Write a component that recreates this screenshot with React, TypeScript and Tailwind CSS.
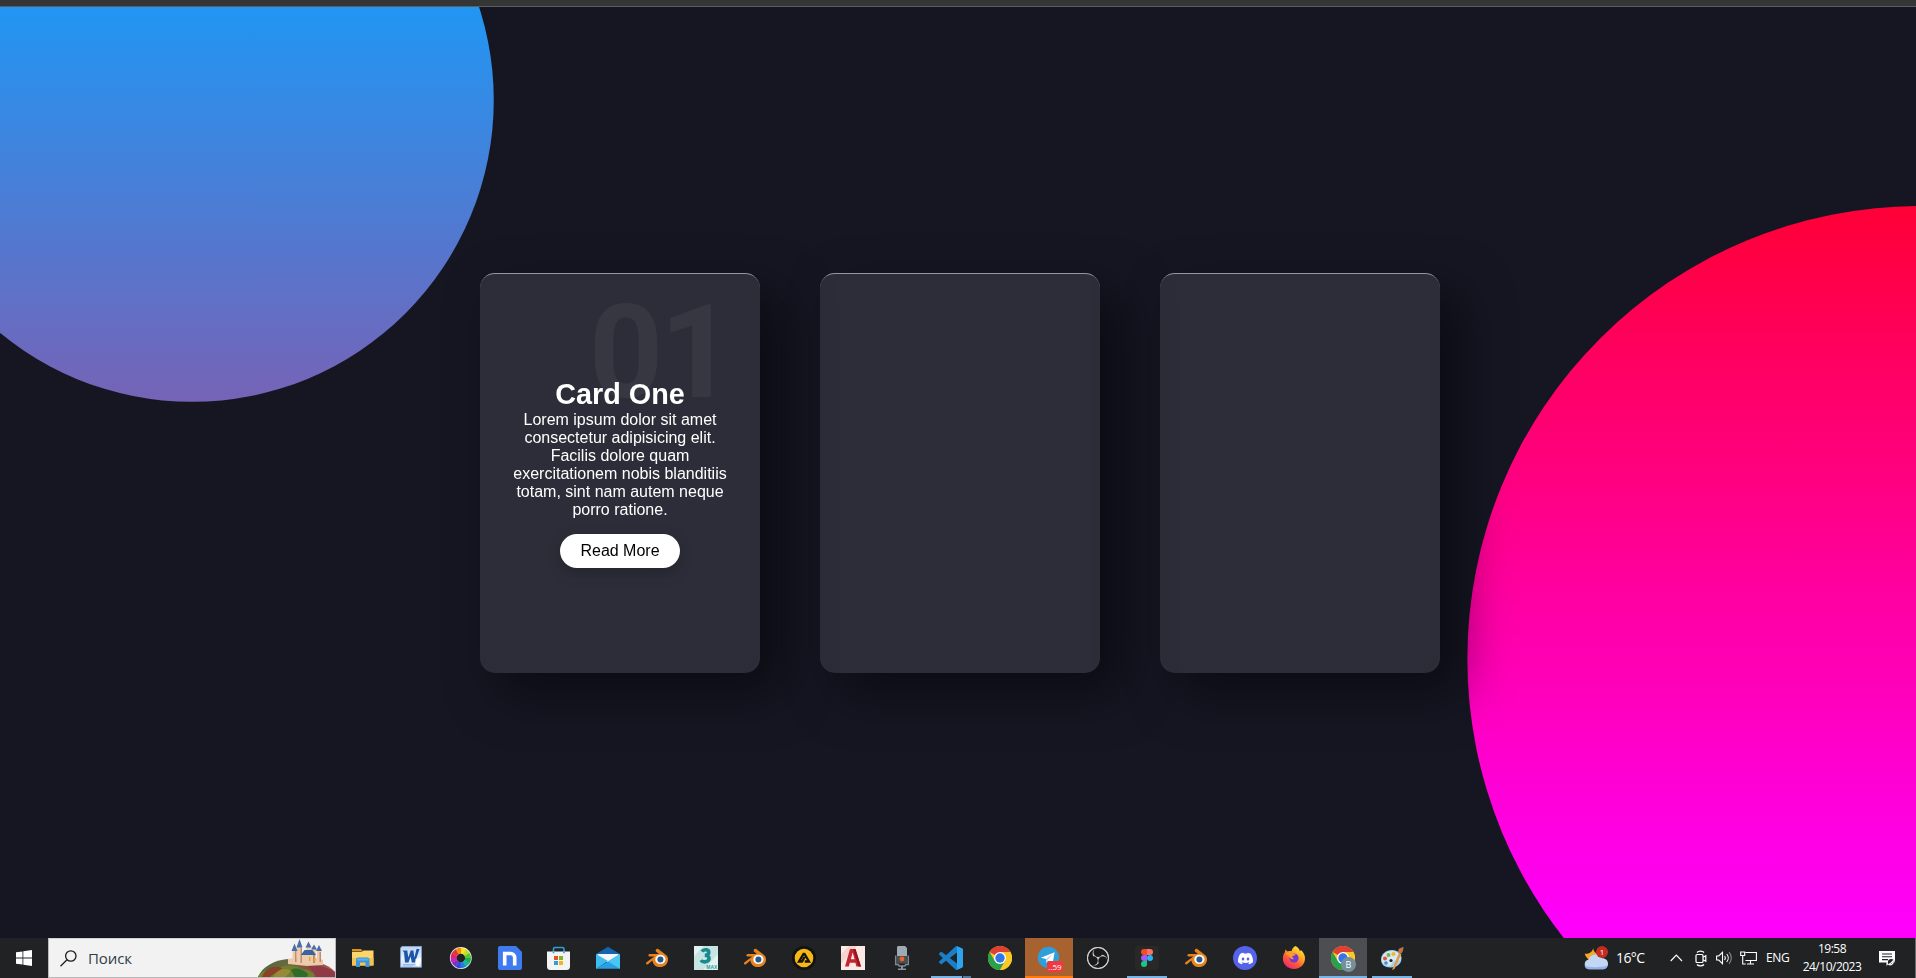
import React from "react";
import { SiObsstudio, SiDiscord } from "react-icons/si";

type IconProps = { children: React.ReactNode };

function Svg({ children }: IconProps) {
  return (
    <svg width="24" height="24" viewBox="0 0 24 24" className="block shrink-0">
      {children}
    </svg>
  );
}

function Explorer() {
  return (
    <Svg>
      <path d="M1 3h9l2 2.5H1z" fill="#d9951f" />
      <path d="M1 6h9.5l2-1.5h10V19.500H1z" fill="#fcd56b" />
      <path d="M1 12h21.500v7.500H1z" fill="#f3c252" />
      <path d="M5 21v-7.500a2 2 0 0 1 2-2h9.500a2 2 0 0 1 2 2V21h-4v-4.500H9V21z" fill="#3c96dc" />
      <path d="M6 12.500h11.500v2H6z" fill="#5cb1ee" />
    </Svg>
  );
}

function Word() {
  return (
    <Svg>
      <defs>
        <linearGradient id="wd" x1="0" y1="0" x2="0" y2="1">
          <stop offset="0" stopColor="#b9d3f2" />
          <stop offset="0.6" stopColor="#e9f1fb" />
          <stop offset="1" stopColor="#c3d9f3" />
        </linearGradient>
      </defs>
      <path d="M2 .3h19.500v21H.5V2z" fill="url(#wd)" stroke="#7ea6dc" strokeWidth=".7" />
      <path d="M3 18.500h12M3 20h10" stroke="#8eaedb" strokeWidth=".8" />
      <path d="M2.500 4.500h4.800l1 7 2.400-7h2.700l1 7L16.500 3H19.500L15 16.500h-3.200l-1.200-6L8.500 16.500H5L4 6.200z" fill="#1d56a8" />
      <path d="M15.500 13l5.500-1v3l-2 5.500-3-1z" fill="#fff" />
    </Svg>
  );
}

function ColorWheel() {
  const colors = ["#f9e423", "#c6dc25", "#5cc634", "#18b04c", "#16b7a4", "#1a82dc", "#3547d4", "#7a2fd0", "#c527b6", "#e3256f", "#e2382b", "#f58a1c"];
  const point = (r: number, t: number) => `${11.8 + r * Math.cos(t)} ${12 + r * Math.sin(t)}`;
  return (
    <Svg>
      <circle cx="11.800" cy="12" r="10.900" fill="#f1f1f1" />
      {colors.map((color, i) => {
        const a = ((i * 30 - 90) * Math.PI) / 180;
        const b = ((i * 30 - 58) * Math.PI) / 180;
        return <path key={color} d={`M${point(4.3, a)}L${point(10.2, a)}A10.200 10.200 0 0 1 ${point(10.2, b)}L${point(4.3, b)}Z`} fill={color} />;
      })}
      <circle cx="11.800" cy="12" r="4.300" fill="#202224" />
    </Svg>
  );
}

function Nimbus() {
  return (
    <Svg>
      <path d="M2 0h16l6 6v16a2 2 0 0 1-2 2H2a2 2 0 0 1-2-2V2a2 2 0 0 1 2-2z" fill="#3f7bf0" />
      <path d="M6.700 19.500V7.500h6a4 4 0 0 1 4 4v8" fill="none" stroke="#fff" strokeWidth="3.600" />
    </Svg>
  );
}

function Store() {
  return (
    <Svg>
      <path d="M6.500 7V3a1.500 1.500 0 0 1 1.500-1.500h7.500A1.500 1.500 0 0 1 17 3v4" fill="none" stroke="#2aa0d8" strokeWidth="1.600" />
      <path d="M0 5.500h23V20.500a3.500 3.500 0 0 1-3.500 3.500h-16A3.500 3.500 0 0 1 0 20.500z" fill="#f3f3f3" />
      <path d="M6.500 5.500v1.800M17 5.500v1.800" stroke="#2aa0d8" strokeWidth="1.600" />
      <path d="M7 10h4v4H7z" fill="#e8502c" />
      <path d="M12 10h4v4h-4z" fill="#7fb52b" />
      <path d="M7 15h4v4H7z" fill="#2a9fe0" />
      <path d="M12 15h4v4h-4z" fill="#f6b41c" />
    </Svg>
  );
}

function Mail() {
  return (
    <Svg>
      <path d="M0 8L12 .7 24 8v4H0z" fill="#1464ae" />
      <path d="M1.500 8h21v8h-21z" fill="#f4f6f8" />
      <path d="M0 8l12 7L0 23z" fill="#3cbcf0" />
      <path d="M24 8L0 22.800h24z" fill="#2a9fe4" />
      <path d="M24 8L12 15.400 24 22.800z" fill="#48c7f5" />
    </Svg>
  );
}

function Blender() {
  return (
    <Svg>
      <path
        d="M13.300 3l8 6.300C24 12 23.400 16.500 20.600 19c-3 2.600-7.600 2.700-10.600.4-1.600-1.300-2.500-3-2.600-4.800L3 18.300c-1.600.8-2.700-.8-1.500-2L9.300 10.400H4.400c-1.500-.3-1.400-2.200.2-2.500h9.300l-3-2.500c-.9-1.300.7-3.200 2.400-2.400z"
        fill="#e8821c"
      />
      <ellipse cx="15.400" cy="13.400" rx="5.200" ry="4.700" fill="#f6f8fa" />
      <circle cx="15.400" cy="13.400" r="3" fill="#24568f" />
    </Svg>
  );
}

function Max3ds() {
  return (
    <Svg>
      <path d="M0 0h24v24H0z" fill="#e3f2f1" />
      <path d="M0 10L10 0h14v8L9 24H0z" fill="#c6e4e2" />
      <path d="M7.800 5.500C9.500 3.200 15 2.800 14.800 6.400c-.1 2-2 2.900-4 2.900 2.500 0 4.400 1 4.200 3.300-.3 4-6.500 4-8 1.500" fill="none" stroke="#178a8f" strokeWidth="3.600" />
      <text x="12.300" y="22.800" fontSize="5.500" fontWeight="700" fill="#1ea0a4" className="font-['Liberation_Sans',sans-serif]" textLength="11" lengthAdjust="spacingAndGlyphs">
        MAX
      </text>
    </Svg>
  );
}

function Aimp() {
  return (
    <Svg>
      <circle cx="12" cy="12" r="12" fill="#131211" />
      <circle cx="12" cy="12" r="9.300" fill="#f6b914" />
      <path d="M12 7.200L17 15.500h-4.300M12 7.200L7 15.500h3l2.600-4.500" fill="none" stroke="#17130a" strokeWidth="2.300" />
    </Svg>
  );
}

function Autocad() {
  return (
    <Svg>
      <path d="M0 0h24v24H0z" fill="#fbe9e6" />
      <path d="M0 8L8 0h8L0 18z" fill="#f7d3cf" />
      <path d="M4 20.500L9 3h5.500L20 20.500h-4.600l-1-3.700H8.800l-1 3.700zM9.800 13.200h3.800L11.700 6.500z" fill="#c22630" />
      <path d="M14.500 3L20 20.500h-2.500L12 3z" fill="#97151f" />
    </Svg>
  );
}

function Mic() {
  return (
    <Svg>
      <path d="M5.700 9.500v9h2.500l1 1.500h5.600l1-1.500h2.500v-9" fill="none" stroke="#7e8a93" strokeWidth="1.500" />
      <path d="M8 0h7l2 2v8H7V1z" fill="#9eabb5" />
      <path d="M7 10h10v7.500H7z" fill="#4b4f54" />
      <circle cx="12" cy="13" r="2.400" fill="#f26322" />
      <path d="M11 20h2v2.500h3V24H8v-1.500h3z" fill="#87949e" />
    </Svg>
  );
}

function VsCode() {
  return (
    <Svg>
      <path
        d="M23.150 2.587L18.210.21a1.494 1.494 0 0 0-1.705.29l-9.460 8.630-4.120-3.128a.999.999 0 0 0-1.276.057L.327 7.261A1 1 0 0 0 .326 8.740L3.899 12 .326 15.260a1 1 0 0 0 .001 1.479L1.650 17.940a.999.999 0 0 0 1.276.057l4.120-3.128 9.460 8.630a1.492 1.492 0 0 0 1.704.290l4.942-2.377A1.500 1.500 0 0 0 24 20.060V3.939a1.500 1.500 0 0 0-.850-1.352zm-5.146 14.861L10.826 12l7.178-5.448v10.896z"
        fill="#1a7fc6"
      />
      <path d="M18 .2l5.200 2.400a1.500 1.500 0 0 1 .8 1.300v16.200a1.500 1.500 0 0 1-.8 1.300L18 23.800z" fill="#2ea3ee" />
    </Svg>
  );
}

function Chrome() {
  return (
    <Svg>
      <circle cx="12" cy="12" r="12" fill="#f9c927" />
      <path d="M12 12L1.600 6A12 12 0 0 1 22.400 6H12z" fill="#e0402f" />
      <path d="M12 12L6.800 15 1.600 6A12 12 0 0 0 12 24l5.200-9z" fill="#2a9f4c" />
      <path d="M12 6h10.400A12 12 0 0 1 12 24l5.200-9z" fill="#f9c927" />
      <circle cx="12" cy="12" r="6" fill="#fff" />
      <circle cx="12" cy="12" r="4.700" fill="#3474e6" />
    </Svg>
  );
}

function ChromeProfile() {
  return (
    <span className="relative block">
      <Chrome />
      <span className="absolute top-[11px] left-[10px] flex size-[15px] items-center justify-center rounded-full bg-[#74909d] font-['Open_Sans',sans-serif] text-[9px] leading-none text-white">
        B
      </span>
    </span>
  );
}

function Telegram() {
  return (
    <span className="relative block">
      <Svg>
        <circle cx="11.500" cy="11.500" r="10.700" fill="#2f9fdc" />
        <path d="M3.800 11.800L17.700 6.200l-2.200 11.500-4-3-2.200 2.200-.3-3.800z" fill="#fff" />
        <path d="M9 13l6.500-5-4.800 6-1.400 2.700z" fill="#b9d7ea" />
      </Svg>
      <span className="absolute top-[15px] left-[10px] flex h-[11px] w-4 items-center justify-center rounded-[2px] bg-[#f0383e] font-['Open_Sans',sans-serif] text-[8px] leading-none text-white">
        ..59
      </span>
    </span>
  );
}

function Obs() {
  return (
    <span className="flex size-6 items-center justify-center">
      <span className="flex size-[22px] items-center justify-center rounded-full bg-[#1a191b] ring-1 ring-[#c4c4c6] ring-inset">
        <SiObsstudio size={22} color="#d0d0d2" />
      </span>
    </span>
  );
}

function Figma() {
  return (
    <Svg>
      <rect width="24" height="24" rx="2" fill="#2a2827" />
      <path d="M9 3h3v6H9a3 3 0 0 1 0-6z" fill="#f04e23" />
      <path d="M12 3h3a3 3 0 0 1 0 6h-3z" fill="#fb7262" />
      <path d="M9 9h3v6H9a3 3 0 0 1 0-6z" fill="#a05afc" />
      <circle cx="15" cy="12" r="3" fill="#20b6fb" />
      <path d="M9 15h3v3a3 3 0 1 1-3-3z" fill="#12cb80" />
    </Svg>
  );
}

function Discord() {
  return (
    <span className="flex size-6 items-center justify-center rounded-full bg-[#5562ea]">
      <SiDiscord size={15} color="#fff" />
    </span>
  );
}

function Firefox() {
  return (
    <Svg>
      <defs>
        <linearGradient id="ff" x1="0.850" y1="0" x2="0.200" y2="1">
          <stop offset="0" stopColor="#fff04a" />
          <stop offset="0.350" stopColor="#ffae22" />
          <stop offset="0.650" stopColor="#ff5a35" />
          <stop offset="1" stopColor="#e8217c" />
        </linearGradient>
      </defs>
      <path
        d="M13.700 0c2.500 1.500 3.800 3.200 4.300 5.200l1-1.200C21.700 6.700 23.300 9.500 23 13c-.4 5.700-5 10-11 10C5.300 23 .8 18.300.9 12.300.9 9.600 1.800 7.600 3 6c0-1 .2-2 .9-2.600.3 1 1 1.700 1.800 2.200C7 5 8.600 5 9.500 5.300 10 3 11.500.8 13.700 0z"
        fill="url(#ff)"
      />
      <circle cx="12" cy="12" r="4.600" fill="#7139d6" />
      <path d="M4 8c2-2 5-1.500 6.500-.8 1 .5 2.500.4 3.300.6-.5 1.500-1.800 2-3.300 2.200-.4 1.200.3 2.600 1.800 3-2.300.8-4.800-.6-5.300-3z" fill="#ff9a2a" />
    </Svg>
  );
}

function Paint() {
  return (
    <Svg>
      <path d="M1 13.500C1 8 6 4 12 4s9.500 3.600 9.500 8.500c0 5.600-5 9-11 9C4.500 21.500 1 18.500 1 13.500z" fill="#a9d0e4" />
      <path d="M2 13c.5-5 5-8 10-8s8.500 3 8.500 7.200c0 2-1.300 2.500-3.200 2.200-2.500-.4-4.500.6-5 2.600-.5 2.300-3 3.300-5.500 2.200C3.500 18.300 1.700 16 2 13z" fill="#d5eaf4" />
      <circle cx="5" cy="12.500" r="2" fill="#e0533e" />
      <circle cx="8.500" cy="9" r="2" fill="#74b83c" />
      <circle cx="13.500" cy="8" r="2.100" fill="#f3b42c" />
      <circle cx="11" cy="14.500" r="1.600" fill="#1f2224" />
      <circle cx="6" cy="17" r="1.800" fill="#3f8fd2" />
      <path d="M18.800 7l2.700 1L14.500 23l-2.500 1z" fill="#e09a50" />
      <path d="M18.500 3.500c1-2 2.500-1.500 5-2.800 0 2.500-.3 5-2.500 7l-3-1.500z" fill="#b77548" />
    </Svg>
  );
}

type App = { name: string; icon: React.ReactNode; tile?: string; bar?: React.ReactNode };

const blueBar = <span className="h-0.5 w-10 bg-[#76b4e6]" />;

const apps: App[] = [
  { name: "explorer", icon: <Explorer /> },
  { name: "word", icon: <Word /> },
  { name: "color", icon: <ColorWheel /> },
  { name: "notes", icon: <Nimbus /> },
  { name: "store", icon: <Store /> },
  { name: "mail", icon: <Mail /> },
  { name: "blender-a", icon: <Blender /> },
  { name: "3ds", icon: <Max3ds /> },
  { name: "blender-b", icon: <Blender /> },
  { name: "aimp", icon: <Aimp /> },
  { name: "autocad", icon: <Autocad /> },
  { name: "mic", icon: <Mic /> },
  {
    name: "vscode",
    icon: <VsCode />,
    bar: (
      <span className="flex h-0.5 w-10 gap-px">
        <span className="w-[31px] bg-[#76b4e6]" />
        <span className="w-2 bg-[#56789a]" />
      </span>
    ),
  },
  { name: "chrome", icon: <Chrome /> },
  { name: "telegram", icon: <Telegram />, tile: "bg-[#a8622f]", bar: <span className="h-0.5 w-12 bg-[#ff7a08]" /> },
  { name: "obs", icon: <Obs /> },
  { name: "figma", icon: <Figma />, bar: blueBar },
  { name: "blender-c", icon: <Blender /> },
  { name: "discord", icon: <Discord /> },
  { name: "firefox", icon: <Firefox /> },
  { name: "chrome-profile", icon: <ChromeProfile />, tile: "bg-[#4c4e51]", bar: <span className="h-0.5 w-12 bg-[#76b4e6]" /> },
  { name: "paint", icon: <Paint />, bar: blueBar },
];

function Castle() {
  return (
    <svg width="77" height="38" viewBox="0 0 77 38" className="block">
      <defs>
        <linearGradient id="hill" x1="0" y1="0" x2="1" y2="0">
          <stop offset="0" stopColor="#4b6a40" />
          <stop offset="0.450" stopColor="#6f6840" />
          <stop offset="0.700" stopColor="#8d4a3c" />
          <stop offset="1" stopColor="#b8605a" />
        </linearGradient>
      </defs>
      <path d="M0 38C4 28 16 21 30 20l32 4c7 2 12 5 15 9v5z" fill="url(#hill)" />
      <path d="M0 38c3-6 10-9 18-8 8-5 20-4 26 0 8 0 12 4 14 8z" fill="#6f7f2c" />
      <path d="M5 36c3-7 12-10 19-7-2 4-9 5-12 9H4z" fill="#8a4127" />
      <path d="M17 35c4-5 10-6 15-4 1 3-3 5-5 7H15z" fill="#96893a" />
      <path d="M33 31c5-3 12-1 17 4l-1 3H37z" fill="#2f6b2b" />
      <path d="M48 27c8-2 21 0 29 6v5H57c0-5-4-9-9-11z" fill="#8e3b45" />
      <path d="M30 20l5-1h26l4 2v5l-16 1-19-2z" fill="#ecc9a8" />
      <path d="M34.500 11h4v12h-4zM39 8h5v16h-5zM48.500 8h4v6h-4zM43 14h14v11H43zM59 12h4v12h-4zM54 10h4v8h-4z" fill="#edccad" />
      <path d="M42.500 9H44v15h-1.500zM55 16h2v8h-2zM37 12h1.500v11H37zM61.500 13H63v10h-1.500z" fill="#c08c6c" />
      <path d="M33.500 12l3-7.500 3 7.500zM38.500 8.500L41.500 0l3 8.500zM47.500 8.500l3-6 3 6zM58 12l3-6 3 6zM53 10.500l3-5 3 5z" fill="#4a6ca8" />
      <path d="M43 16l3.500-5h8l3.500 5z" fill="#3b62a2" />
      <path d="M51 18h1.500v4H51zM56 18.500h1.500V22H56z" fill="#e9a42e" />
    </svg>
  );
}

function Card({ children }: { children?: React.ReactNode }) {
  return (
    <article className="flex h-[400px] w-[280px] items-center justify-center rounded-[15px] border-t border-white/50 bg-white/10 shadow-[20px_20px_50px_rgba(0,0,0,0.5)] backdrop-blur-[5px]">
      {children}
    </article>
  );
}

function Taskbar() {
  return (
    <footer className="flex h-10 w-[1920px] shrink-0 bg-[#202224] font-['Open_Sans','Noto_Sans',sans-serif] text-white">
      <div className="flex w-12 items-center justify-center">
        <svg width="16" height="16" viewBox="0 0 16 16">
          <path d="M0 2.300L6.500 1.400v6.200H0zM7.300 1.300L16 0v7.600H7.300zM0 8.400h6.500v6.200L0 13.700zM7.300 8.400H16V16l-8.700-1.300z" fill="#fff" />
        </svg>
      </div>
      <div className="mr-[3px] flex w-72 items-center justify-between border border-[#b9b9b9] border-t-[#d0d0d0] bg-[#f2f2f2] pl-[11px]">
        <div className="flex items-center gap-[11px]">
          <svg width="17" height="17" viewBox="0 0 17 17" fill="none" stroke="#1c1c1c" strokeWidth="1.300">
            <circle cx="10.800" cy="6" r="5.200" />
            <path d="M7 9.800L.5 16.300" />
          </svg>
          <span className="text-[15px] leading-5 tracking-[-0.1px] text-[#2f3d47]">Поиск</span>
        </div>
        <Castle />
      </div>
      <nav className="flex gap-px">
        {apps.map((app) => (
          <div key={app.name} className={`grid w-12 grid-rows-[38px_2px] justify-items-center ${app.tile ?? ""}`}>
            <div className="flex items-center pt-0.5">{app.icon}</div>
            {app.bar}
          </div>
        ))}
      </nav>
      <div className="ml-[168px] flex items-center">
        <div className="flex w-[86px] items-center gap-2">
          <span className="relative block">
            <svg width="24" height="24" viewBox="0 0 24 24" className="block">
              <path d="M9.500 0c-1 3 .5 6.500 4 8l1 4-9 2C2.500 12 1 9.500.8 7.500 4 8.500 9 7 9.500 0z" fill="#f5a822" />
              <path d="M5 23.300a5 5 0 0 1-.5-9.800 7.500 7.500 0 0 1 13.500-1.300c3.500-.2 6 2.200 6 5.500 0 3.200-2.300 5.600-5.500 5.600z" fill="#c3d7f5" />
              <path d="M5 23.300a5 5 0 0 1-4.500-3.800c5 2.500 17 2 23.300 0-.8 2.300-2.800 3.800-5.300 3.800z" fill="#91b3ea" />
            </svg>
            <span className="absolute top-0 left-3 flex size-3 items-center justify-center rounded-full bg-[#c52b20] text-[8px] leading-none">1</span>
          </span>
          <span className="text-[14px] leading-5 tracking-[-0.6px]">16°C</span>
        </div>
        <div className="w-[25px]">
          <svg width="13" height="8" viewBox="0 0 13 8" fill="none" stroke="#fff" strokeWidth="1.200">
            <path d="M.7 7L6.300 1.200 12 7" />
          </svg>
        </div>
        <div className="w-[21px]">
          <svg width="12" height="17" viewBox="0 0 12 17" fill="none" stroke="#fff" strokeWidth="1.200">
            <rect x="1" y="4.500" width="7" height="8" rx="1" />
            <path d="M8 7.300l2.800-1.500v5.400L8 9.700M2 2.500C3.500.7 7.500.7 9 2.500M2 14.500c1.500 1.800 5.500 1.800 7 0" />
          </svg>
        </div>
        <div className="w-6">
          <svg width="17" height="14" viewBox="0 0 17 14" fill="none" stroke="#fff" strokeWidth="1.100">
            <path d="M.6 5h2.200L6.500 1.300v11.400L2.800 9H.6zM8.500 5c1 1.200 1 2.800 0 4M10.700 3c2 2.300 2 5.700 0 8" />
            <path d="M13 1.200c3 3.300 3 8.300 0 11.600" stroke="#8a8b8d" />
          </svg>
        </div>
        <div className="w-[26px]">
          <svg width="17" height="14" viewBox="0 0 17 14" fill="none" stroke="#fff" strokeWidth="1.100">
            <path d="M5.500 1.500h10.900v8H5.500M10.500 9.500V13M7 13h7M.7 1h4v3.500h-4zM2.700 4.500V13h3" />
          </svg>
        </div>
        <span className="w-[31px] text-[12px] leading-4 tracking-[-0.400px]">ENG</span>
        <div className="flex w-[70px] flex-col items-center text-[12px] leading-[18px] tracking-[-0.500px]">
          <span>19:58</span>
          <span>24/10/2023</span>
        </div>
        <div className="pl-3">
          <svg width="17" height="17" viewBox="0 0 17 17">
            <path d="M0 1h16v11.500h-5.500L7.500 16v-3.500H0z" fill="#fff" />
            <path d="M3 4h10M3 6.800h10M3 9.600h6" stroke="#202224" strokeWidth="1.100" />
            <circle cx="12.200" cy="12.200" r="3.300" fill="#202224" />
            <path d="M9.800 14.500c2 1 5-.5 4.500-4-1 1.500-2.500 2.800-4.500 4z" fill="none" stroke="#fff" strokeWidth="1.200" />
          </svg>
        </div>
        <div className="ml-[19px] h-10 w-px bg-[#6a6b6d]" />
      </div>
    </footer>
  );
}

export default function App() {
  return (
    <div className="flex h-[978px] w-full flex-col overflow-hidden bg-[#161623]">
      <div className="h-[7px] w-[1920px] shrink-0 border-b border-[#5c5d5f] bg-[#353535]" />
      <main className="relative flex h-[931px] w-[1920px] shrink-0 items-center justify-center overflow-hidden bg-[#161623] font-['Liberation_Sans',Arial,sans-serif]">
        <div className="absolute inset-0 bg-[linear-gradient(#f00,#f0f)] [clip-path:circle(30%_at_right_70%)]" />
        <div className="absolute inset-0 bg-[linear-gradient(#2196f3,#e91e63)] [clip-path:circle(20%_at_10%_10%)]" />
        <section className="relative flex gap-[60px] pt-px">
          <Card>
            <div className="relative mb-px p-5 text-center">
              <h2 className="pointer-events-none absolute -top-[79px] right-[29px] font-['Roboto',sans-serif] text-[129px] leading-[147px] font-bold tracking-[-3px] text-white/5">01</h2>
              <h3 className="text-[28.800px] leading-[33px] font-bold text-white">Card One</h3>
              <p className="text-[16px] leading-[18px] text-white">
                Lorem ipsum dolor sit amet consectetur adipisicing elit. Facilis dolore quam exercitationem nobis blanditiis totam, sint nam autem neque porro ratione.
              </p>
              <a className="mt-[15px] inline-block rounded-[20px] bg-white px-5 py-2 align-top text-[16px] leading-[18px] text-black shadow-[0_5px_15px_rgba(0,0,0,0.2)]">Read More</a>
            </div>
          </Card>
          <Card />
          <Card />
        </section>
      </main>
      <Taskbar />
    </div>
  );
}
